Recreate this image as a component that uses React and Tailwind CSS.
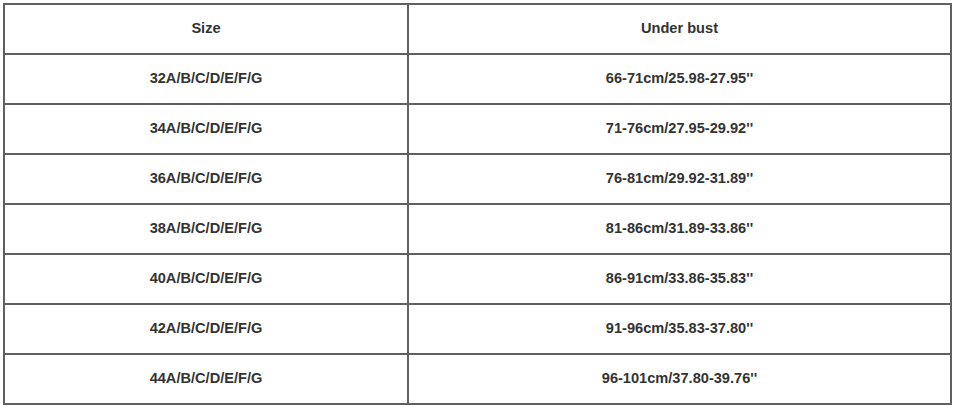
const rows = [
  ["32A/B/C/D/E/F/G", "66-71cm/25.98-27.95''"],
  ["34A/B/C/D/E/F/G", "71-76cm/27.95-29.92''"],
  ["36A/B/C/D/E/F/G", "76-81cm/29.92-31.89''"],
  ["38A/B/C/D/E/F/G", "81-86cm/31.89-33.86''"],
  ["40A/B/C/D/E/F/G", "86-91cm/33.86-35.83''"],
  ["42A/B/C/D/E/F/G", "91-96cm/35.83-37.80''"],
  ["44A/B/C/D/E/F/G", "96-101cm/37.80-39.76''"],
];

const Cell = ({ children }) => (
  <div className="h-[50px] flex items-center justify-center border-r-2 border-b-2 border-[#606060] text-[14.6px] font-bold text-[#333]">
    {children}
  </div>
);

const App = () => {
  return (
    <div
      className="min-h-screen bg-white pt-[3px] pl-[3px]"
      style={{ fontFamily: '"Liberation Sans", Arial, sans-serif' }}
    >
      <div className="w-[949px] grid grid-cols-[404px_1fr] border-l-2 border-t-2 border-[#606060]">
        <Cell>Size</Cell>
        <Cell>Under bust</Cell>
        {rows.map(([size, bust]) => (
          <div key={size} className="contents">
            <Cell>{size}</Cell>
            <Cell>{bust}</Cell>
          </div>
        ))}
      </div>
    </div>
  );
};

export default App;
